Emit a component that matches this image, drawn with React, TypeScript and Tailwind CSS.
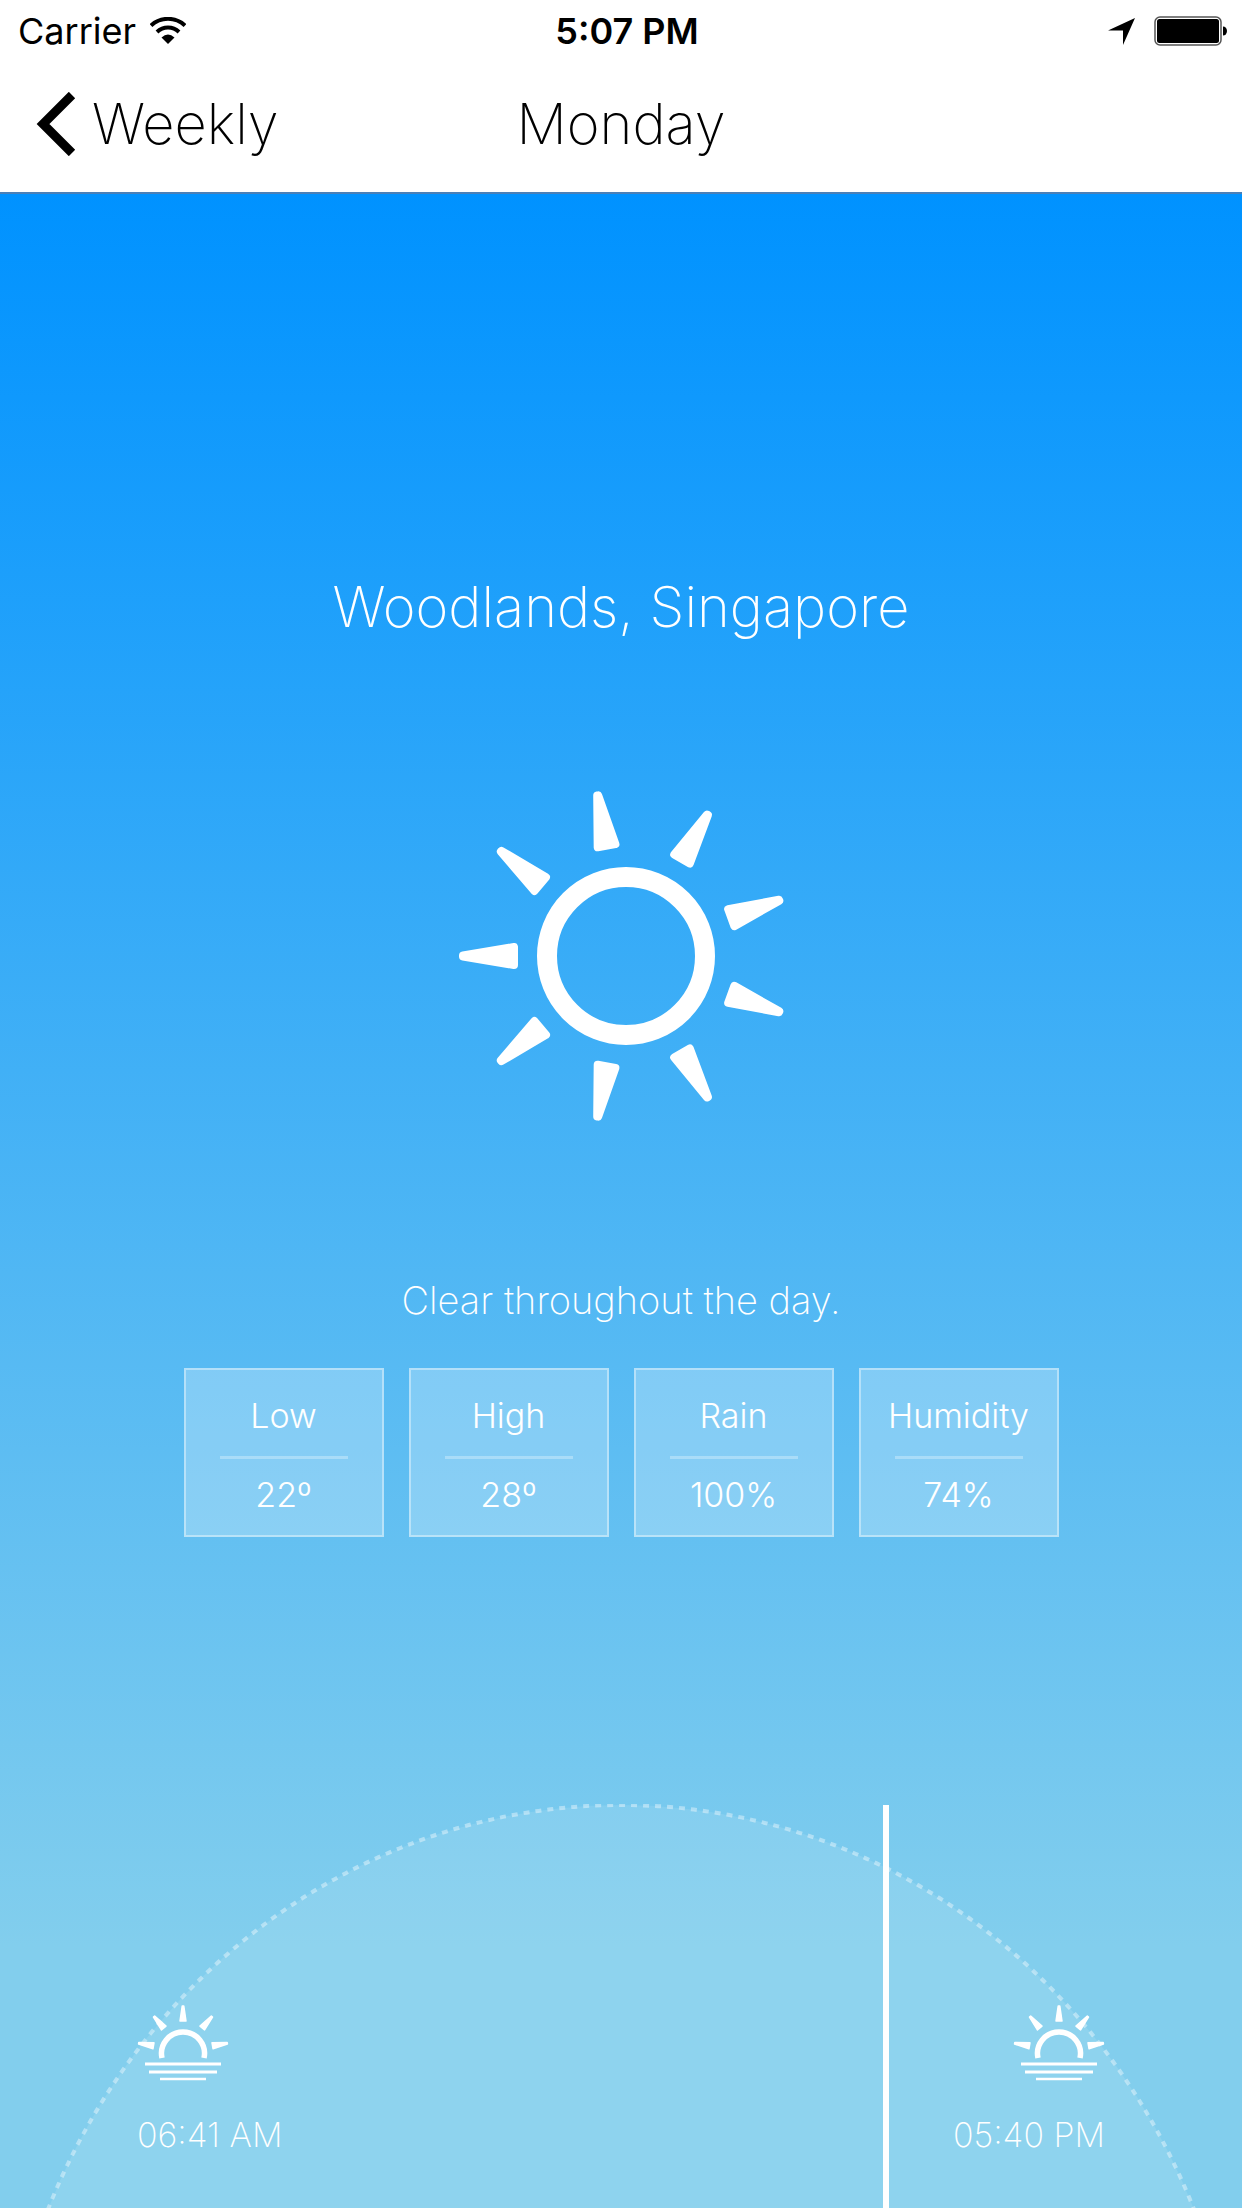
const stats = [
  { label: "Low", value: "22º" },
  { label: "High", value: "28º" },
  { label: "Rain", value: "100%" },
  { label: "Humidity", value: "74%" },
];

const sunRays = [20, 60, 100, 140, 180, 220, 260, 300, 340];
const horizonRays = [-80, -40, 0, 40, 80];

function WifiIcon() {
  return (
    <svg className="h-7 w-9" viewBox="0 0 36 28" fill="none" stroke="black" strokeWidth="4" aria-hidden="true">
      <path d="M1 8.5A25 25 0 0 1 35 8.5" />
      <path d="M7 15A16 16 0 0 1 29 15" />
      <path d="M11.5 20.5Q18 14.500 24.500 20.500L18 27Z" fill="black" stroke="none" />
    </svg>
  );
}

function LocationIcon() {
  return (
    <svg className="h-7 w-7" viewBox="0 0 28 28" aria-hidden="true">
      <path d="M27 1L15 28V13.500H0Z" fill="black" />
    </svg>
  );
}

function BatteryIcon() {
  return (
    <svg className="h-[30px] w-[74px]" viewBox="0 0 74 30" aria-hidden="true">
      <rect x="1" y="1" width="66" height="28" rx="5" fill="white" stroke="#555" strokeWidth="1.500" />
      <rect x="3" y="3" width="62" height="24" rx="2.500" fill="black" />
      <path d="M69 10.500a4 4.500 0 0 1 4 4.500 4 4.500 0 0 1 -4 4.500z" fill="black" />
    </svg>
  );
}

function SunIcon() {
  return (
    <svg className="h-[336px] w-[328px]" viewBox="-169 -168 328 336" fill="white" stroke="white" role="img" aria-label="Clear">
      <circle r="79" fill="none" strokeWidth="20" />
      {sunRays.map((angle) => (
        <path
          key={angle}
          d="M112 -9L163 -.5V.5L112 9Z"
          transform={`rotate(${angle})`}
          strokeWidth="8"
          strokeLinejoin="round"
        />
      ))}
    </svg>
  );
}

function HorizonIcon({ label }: { label: string }) {
  return (
    <svg className="h-[76px] w-[92px]" viewBox="-46 -46 92 76" fill="none" stroke="white" role="img" aria-label={label}>
      <path d="M-21 7A21.500 21.500 0 1 1 21 7" strokeWidth="5.500" />
      {horizonRays.map((angle) => (
        <path
          key={angle}
          d="M-3 -30L-.8 -45H.8L3 -30Z"
          transform={`rotate(${angle})`}
          fill="white"
          strokeWidth="1.500"
          strokeLinejoin="round"
        />
      ))}
      <path d="M-38 13H38M-34 21H34" strokeWidth="3" />
      <path d="M-23 28H23" strokeWidth="2.500" />
    </svg>
  );
}

function SunTime({ label, time, end }: { label: string; time: string; end?: boolean }) {
  return (
    <div className={end ? "flex flex-col items-end gap-8" : "flex flex-col items-start gap-8"}>
      <HorizonIcon label={label} />
      <time className="text-[34px] leading-[44px] font-extralight">{time}</time>
    </div>
  );
}

export default function App() {
  return (
    <div className="flex min-h-screen flex-col bg-white font-['Inter',sans-serif] text-black">
      <header className="border-b-2 border-[#4a80b8]">
        <div className="grid h-[62px] grid-cols-3 items-center pr-3.5 pl-[18px] text-4xl">
          <div className="flex items-center gap-3.5">
            <span>Carrier</span>
            <WifiIcon />
          </div>
          <time className="pl-2 text-center font-semibold">5:07 PM</time>
          <div className="flex items-center justify-end gap-[18px]">
            <LocationIcon />
            <BatteryIcon />
          </div>
        </div>
        <nav className="grid h-[130px] grid-cols-3 items-start px-9 pt-[26px] text-[56px] leading-[72px] font-extralight">
          <button type="button" className="flex items-center gap-4 justify-self-start">
            <svg className="h-16 w-10" viewBox="0 0 40 64" fill="none" stroke="black" strokeWidth="9" aria-hidden="true">
              <path d="M36 3L7 32L36 61" />
            </svg>
            Weekly
          </button>
          <h1 className="text-center">Monday</h1>
        </nav>
      </header>

      <main className="flex flex-1 flex-col items-center bg-[linear-gradient(#0092ff_0%,#82ceed_87%)] text-white">
        <h2 className="mt-[377px] text-[56px] leading-[72px] font-extralight">Woodlands, Singapore</h2>
        <div className="mt-[145px]">
          <SunIcon />
        </div>
        <p className="mt-[148px] text-[38px] leading-[56px] font-extralight">Clear throughout the day.</p>
        <dl className="mt-10 grid grid-cols-4 gap-[25px]">
          {stats.map((stat) => (
            <div
              key={stat.label}
              className="flex w-[200px] flex-col items-center border-2 border-white/40 bg-white/25 pt-5 pb-3.5 text-[34px] leading-[52px] font-light"
            >
              <dt>{stat.label}</dt>
              <dd className="mt-3.5 flex flex-col items-center before:mb-2.5 before:h-[3px] before:w-32 before:bg-white/30">
                {stat.value}
              </dd>
            </div>
          ))}
        </dl>

        <section aria-label="Daylight" className="relative mt-auto h-[404px] w-full overflow-hidden">
          <svg className="absolute top-0 left-0 w-full" viewBox="0 0 1242 404" aria-hidden="true">
            <ellipse cx="621" cy="659" rx="621" ry="658" fill="white" fillOpacity="0.1" />
            <ellipse
              cx="621"
              cy="659"
              rx="621"
              ry="658"
              fill="none"
              stroke="white"
              strokeOpacity="0.4"
              strokeWidth="4"
              strokeDasharray="6 6"
            />
            <path d="M886 1V404" stroke="white" strokeWidth="6" />
          </svg>
          <div className="relative flex justify-between px-[137px] pt-[201px]">
            <SunTime label="Sunrise" time="06:41 AM" />
            <SunTime label="Sunset" time="05:40 PM" end />
          </div>
        </section>
      </main>
    </div>
  );
}
